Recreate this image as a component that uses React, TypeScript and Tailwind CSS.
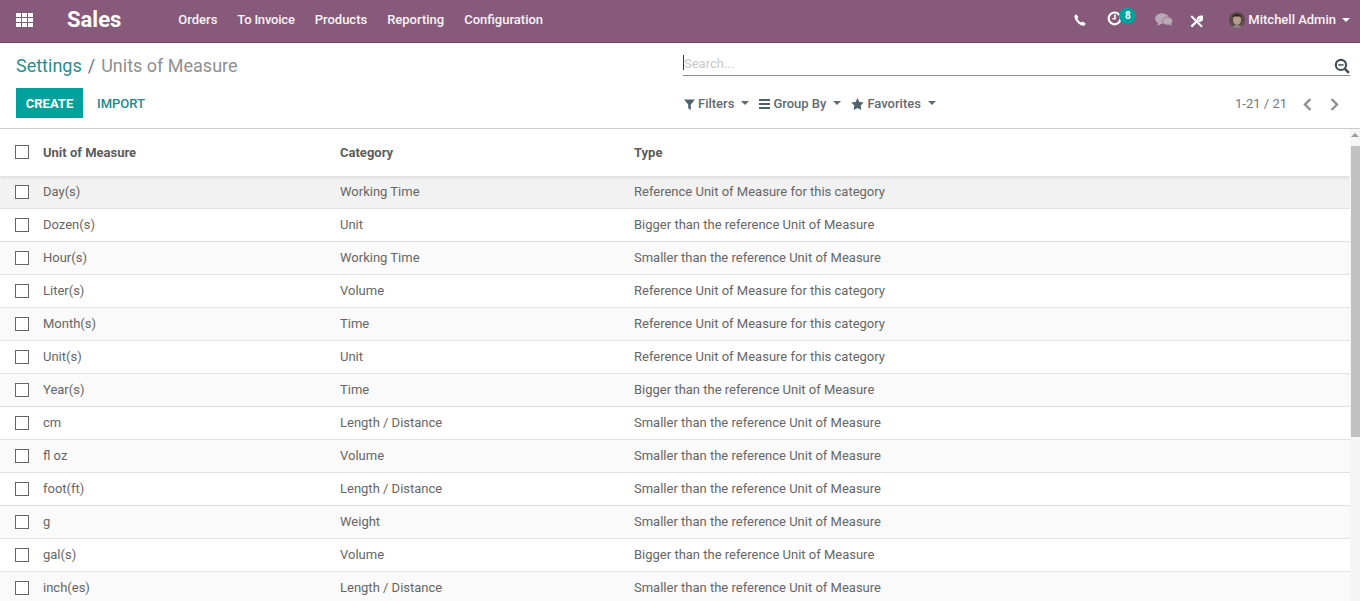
import React from "react";

const rows: [string, string, string][] = [
  ["Day(s)", "Working Time", "Reference Unit of Measure for this category"],
  ["Dozen(s)", "Unit", "Bigger than the reference Unit of Measure"],
  ["Hour(s)", "Working Time", "Smaller than the reference Unit of Measure"],
  ["Liter(s)", "Volume", "Reference Unit of Measure for this category"],
  ["Month(s)", "Time", "Reference Unit of Measure for this category"],
  ["Unit(s)", "Unit", "Reference Unit of Measure for this category"],
  ["Year(s)", "Time", "Bigger than the reference Unit of Measure"],
  ["cm", "Length / Distance", "Smaller than the reference Unit of Measure"],
  ["fl oz", "Volume", "Smaller than the reference Unit of Measure"],
  ["foot(ft)", "Length / Distance", "Smaller than the reference Unit of Measure"],
  ["g", "Weight", "Smaller than the reference Unit of Measure"],
  ["gal(s)", "Volume", "Bigger than the reference Unit of Measure"],
  ["inch(es)", "Length / Distance", "Smaller than the reference Unit of Measure"],
];

const Caret = ({ c = "border-t-[#4c4c4c]" }: { c?: string }) => (
  <span className={`inline-block w-0 h-0 border-x-[4px] border-x-transparent border-t-[4px] ${c}`} />
);

const Box = () => <span className="block w-[14px] h-[14px] border border-[#666] bg-white" />;

export default function App() {
  return (
    <div className="w-[1360px] h-[601px] overflow-hidden bg-white flex flex-col text-[13px] text-[#666] font-['Roboto',sans-serif]">
      <nav className="h-[43px] shrink-0 bg-[#875a7b] border-b border-[#6b4862] flex items-center text-white">
        <svg className="ml-[16px] w-[18px] h-[14px] mb-[2px]" viewBox="0 0 18 14" fill="#fff">
          <rect x="0" y="0" width="5" height="4" /><rect x="6" y="0" width="5" height="4" /><rect x="12" y="0" width="5" height="4" />
          <rect x="0" y="5" width="5" height="4" /><rect x="6" y="5" width="5" height="4" /><rect x="12" y="5" width="5" height="4" />
          <rect x="0" y="10" width="5" height="4" /><rect x="6" y="10" width="5" height="4" /><rect x="12" y="10" width="5" height="4" />
        </svg>
        <span className="ml-[33px] text-[22px] font-bold leading-none mb-[2px]">Sales</span>
        <div className="ml-[57px] flex gap-[20px] font-medium text-[13px] text-[#f8f4f7] mb-[3px]">
          <span>Orders</span><span className="tracking-[-0.2px]">To Invoice</span><span>Products</span><span>Reporting</span><span>Configuration</span>
        </div>
        <div className="ml-auto flex items-center mr-[10px] mb-[2px]">
          <svg className="w-[12px] h-[12px] mr-[21px]" viewBox="0 0 12 12" fill="#fff">
            <path d="M2.6 0.4 L4.4 3.2 L3.3 4.6 C3.8 6 5.4 7.9 7.2 8.6 L8.6 7.5 L11.6 9.4 C11.4 10.8 9.9 11.9 8.8 11.7 C4.8 11 1 6.6 0.4 2.8 C0.3 1.7 1.4 0.5 2.6 0.4 Z" />
          </svg>
          <span className="relative mr-[32px] mb-[4px] block w-[16px] h-[16px]">
            <svg className="w-[16px] h-[16px]" viewBox="0 0 16 16" fill="none" stroke="#fff">
              <circle cx="7.6" cy="8.4" r="5.9" strokeWidth="2.2" />
              <path strokeWidth="1.6" d="M8 4.4 V8.8 H5.4" />
            </svg>
            <span className="absolute left-[12px] -top-[2px] w-[17px] h-[16px] rounded-full bg-[#00a09d] text-white text-[10px] font-bold leading-[16px] text-center">8</span>
          </span>
          <svg className="w-[18px] h-[14px] mr-[17px]" viewBox="0 0 18 14" fill="#b9a9b5">
            <ellipse cx="7" cy="5.5" rx="7" ry="5.2" />
            <path d="M3 9 L2.6 13 L7 10 Z" />
            <ellipse cx="12.5" cy="8" rx="5.2" ry="4" stroke="#875a7b" strokeWidth="0.6" />
            <path d="M14 11 L16.6 13.6 L16 10 Z" />
          </svg>
          <svg className="w-[13px] h-[13px] mr-[26px] mt-[2px]" viewBox="0 0 13 13" stroke="#fff" fill="none">
            <path strokeWidth="2" d="M1.2 1 L12 11.8" />
            <path strokeWidth="2.4" d="M1.4 11.6 L8 5" />
            <path strokeWidth="2" d="M7.5 5.5 C7.4 3 9 1.4 11.6 1.4 L9.8 3.4 L10.4 4.2 L12.4 2.6 C12.6 5 10.6 6.4 8.6 6" />
          </svg>
          <svg className="w-[16px] h-[16px] rounded-full mr-[3px]" viewBox="0 0 16 16">
            <rect width="16" height="16" fill="#5b4a48" />
            <ellipse cx="8" cy="8" rx="4" ry="5" fill="#b89a8c" />
            <path d="M3 5 C4 1 12 1 13 5 L11 4.4 L5 4.4 Z" fill="#2e2624" />
            <path d="M3 16 C3 12 13 12 13 16 Z" fill="#8a8682" />
          </svg>
          <span className="text-[#f8f4f7] font-medium text-[13px] mr-[6px]">Mitchell Admin</span>
          <Caret c="border-t-white" />
        </div>
      </nav>

      <header className="h-[86px] shrink-0 border-b border-[#ccc] relative flex">
        <div className="w-[683px] pl-[16px] flex flex-col">
          <div className="mt-[10px] text-[18px] leading-[26px] text-[#8f8f8f]">
            <span className="text-[#268e8c]">Settings</span>
            <span className="text-[#6c757d] mx-[6px]">/</span>
            <span>Units of Measure</span>
          </div>
          <div className="mt-[9px] h-[30px] flex items-center">
            <span className="w-[67px] h-[30px] pt-[1px] bg-[#00a09d] text-white font-bold text-[13px] flex items-center justify-center">CREATE</span>
            <span className="ml-[14px] pt-[1px] text-[#1b8a8c] font-medium text-[13px]">IMPORT</span>
          </div>
        </div>
        <div className="w-[667px] flex flex-col">
          <div className="mt-[9px] h-[24px] border-b border-[#8c8c8c] flex items-center relative">
            <span className="absolute left-0 top-[3px] w-px h-[15px] bg-[#333]" />
            <span className="text-[#c9c9c9] text-[13px] ml-[1px]">Search...</span>
            <svg className="ml-auto w-[16px] h-[16px] mt-[4px]" viewBox="0 0 15 15" fill="none" stroke="#3f4f55">
              <circle cx="6.5" cy="6.5" r="4.8" strokeWidth="2" />
              <path strokeWidth="1.4" d="M4 6.5 H9" />
              <path strokeWidth="2.4" d="M10 10 L14 14" />
            </svg>
          </div>
          <div className="mt-[18px] flex items-center text-[13px] font-medium text-[#5f6b70] relative h-[20px]">
            <svg className="ml-[1px] w-[11px] h-[11px] mr-[3px]" viewBox="0 0 11 11" fill="#50626a"><path d="M0 0.5 H11 L6.8 5.4 V11 L4.2 9.2 V5.4 Z" /></svg>
            <span>Filters</span>
            <span className="ml-[7px] mb-[3px] flex"><Caret c="border-t-[#5f6b70]" /></span>
            <svg className="ml-[10px] w-[11px] h-[10px] mr-[3px]" viewBox="0 0 11 10" fill="#50626a"><rect width="11" height="2" /><rect y="4" width="11" height="2" /><rect y="8" width="11" height="2" /></svg>
            <span>Group By</span>
            <span className="ml-[7px] mb-[3px] flex"><Caret c="border-t-[#5f6b70]" /></span>
            <svg className="ml-[10px] w-[13px] h-[12px] mr-[3px]" viewBox="0 0 24 23" fill="#50626a"><path d="M12 0 L15.7 7.6 L24 8.8 L18 14.6 L19.4 23 L12 19 L4.6 23 L6 14.6 L0 8.8 L8.3 7.6 Z" /></svg>
            <span>Favorites</span>
            <span className="ml-[7px] mb-[3px] flex"><Caret c="border-t-[#5f6b70]" /></span>
            <div className="ml-auto flex items-center text-[#6f7a80] font-normal">
              <span>1-21 / 21</span>
              <svg className="ml-[16px] w-[9px] h-[13px]" viewBox="0 0 9 13" fill="none" stroke="#8f8f8f" strokeWidth="2.4"><path d="M7.5 1 L2 6.5 L7.5 12" /></svg>
              <svg className="ml-[18px] mr-[11px] w-[9px] h-[13px]" viewBox="0 0 9 13" fill="none" stroke="#8f8f8f" strokeWidth="2.4"><path d="M1.5 1 L7 6.5 L1.5 12" /></svg>
            </div>
          </div>
        </div>
        <span className="w-[10px]" />
      </header>

      <div className="flex-1 min-h-0 flex">
        <div className="w-[1350px] overflow-hidden">
          <div className="h-[47px] flex items-center font-bold text-[#5c5c5c] relative z-10 shadow-[0_1px_4px_rgba(0,0,0,0.12)] bg-white">
            <span className="w-[43px] pl-[15px] mb-[2px]"><Box /></span>
            <span className="w-[297px]">Unit of Measure</span>
            <span className="w-[294px]">Category</span>
            <span>Type</span>
          </div>
          {rows.map((r, i) => (
            <div
              key={r[0]}
              className={`h-[33px] flex items-center border-b border-[#dee2e6] ${i === 0 ? "bg-[#f2f2f2]" : i % 2 === 1 ? "bg-white" : "bg-[#fafafa]"}`}
            >
              <span className="w-[43px] pl-[15px]"><Box /></span>
              <span className="w-[297px]">{r[0]}</span>
              <span className="w-[294px]">{r[1]}</span>
              <span>{r[2]}</span>
            </div>
          ))}
        </div>
        <div className="w-[10px] bg-[#f5f5f5] flex flex-col">
          <svg className="w-[10px] h-[17px]" viewBox="0 0 10 17" fill="#a39a9e"><path d="M5 4 L9 8 H1 Z" /></svg>
          <div className="h-[291px] ml-[1px] bg-[#c1c1c1]" />
        </div>
      </div>
    </div>
  );
}
